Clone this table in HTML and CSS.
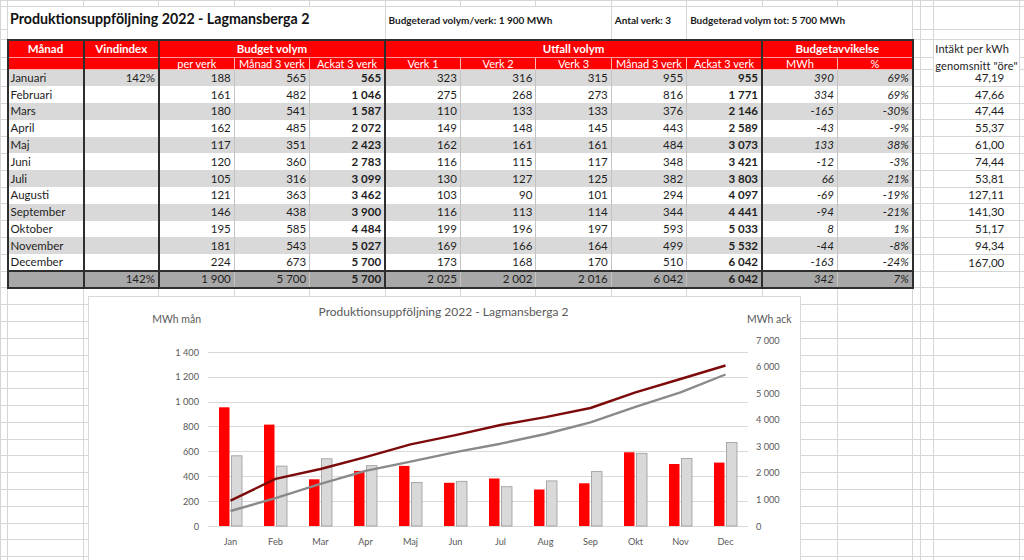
FILE: index.html
```html
<!DOCTYPE html>
<html lang="sv">
<head>
<meta charset="utf-8">
<title>Produktionsuppföljning 2022 - Lagmansberga 2</title>
<link rel="stylesheet" href="styles.css">
</head>
<body>
<div class="sheet">
<table class="grid">
<colgroup>
<col class="c0"><col class="ca"><col class="cn" span="11"><col class="cm"><col class="cnn"><col class="co"><col class="cp">
</colgroup>
<tbody>
<tr class="r0"><td></td><td></td><td></td><td></td><td></td><td></td><td></td><td></td><td></td><td></td><td></td><td></td><td></td><td></td><td></td><td></td><td></td></tr>
<tr class="r1"><td></td><td colspan="5" rowspan="2" class="title">Produktionsuppföljning 2022 - Lagmansberga 2</td><td colspan="3" rowspan="2" class="info">Budgeterad volym/verk: 1 900 MWh</td><td rowspan="2" class="info">Antal verk: 3</td><td colspan="3" rowspan="2" class="info">Budgeterad volym tot: 5 700 MWh</td><td></td><td></td><td></td><td></td></tr>
<tr class="r2"><td></td><td></td><td></td><td></td><td></td></tr>
<tr class="rh1"><td></td><th class="hd bl bt">Månad</th><th class="hd bl bt">Vindindex</th><th colspan="3" class="hd bl bt">Budget volym</th><th colspan="5" class="hd bl bt">Utfall volym</th><th colspan="2" class="hd bl br bt">Budgetavvikelse</th><td></td><td></td><td rowspan="2" class="inc-h"><div class="inc-txt">Intäkt per kWh<br>genomsnitt "öre"</div></td><td></td></tr>
<tr class="rh2"><td></td><th class="hs bl"></th><th class="hs bl"></th><th class="hs bl">per verk</th><th class="hs">Månad 3 verk</th><th class="hs">Ackat 3 verk</th><th class="hs bl">Verk 1</th><th class="hs">Verk 2</th><th class="hs">Verk 3</th><th class="hs">Månad 3 verk</th><th class="hs">Ackat 3 verk</th><th class="hs bl">MWh</th><th class="hs br">%</th><td></td><td></td><td></td></tr>
<tr class="rd g"><td></td><td>Januari</td><td>142%</td><td>188</td><td>565</td><td>565</td><td>323</td><td>316</td><td>315</td><td>955</td><td>955</td><td>390</td><td>69%</td><td></td><td></td><td>47,19</td><td></td></tr>
<tr class="rd"><td></td><td>Februari</td><td></td><td>161</td><td>482</td><td>1 046</td><td>275</td><td>268</td><td>273</td><td>816</td><td>1 771</td><td>334</td><td>69%</td><td></td><td></td><td>47,66</td><td></td></tr>
<tr class="rd g"><td></td><td>Mars</td><td></td><td>180</td><td>541</td><td>1 587</td><td>110</td><td>133</td><td>133</td><td>376</td><td>2 146</td><td>-165</td><td>-30%</td><td></td><td></td><td>47,44</td><td></td></tr>
<tr class="rd"><td></td><td>April</td><td></td><td>162</td><td>485</td><td>2 072</td><td>149</td><td>148</td><td>145</td><td>443</td><td>2 589</td><td>-43</td><td>-9%</td><td></td><td></td><td>55,37</td><td></td></tr>
<tr class="rd g"><td></td><td>Maj</td><td></td><td>117</td><td>351</td><td>2 423</td><td>162</td><td>161</td><td>161</td><td>484</td><td>3 073</td><td>133</td><td>38%</td><td></td><td></td><td>61,00</td><td></td></tr>
<tr class="rd"><td></td><td>Juni</td><td></td><td>120</td><td>360</td><td>2 783</td><td>116</td><td>115</td><td>117</td><td>348</td><td>3 421</td><td>-12</td><td>-3%</td><td></td><td></td><td>74,44</td><td></td></tr>
<tr class="rd g"><td></td><td>Juli</td><td></td><td>105</td><td>316</td><td>3 099</td><td>130</td><td>127</td><td>125</td><td>382</td><td>3 803</td><td>66</td><td>21%</td><td></td><td></td><td>53,81</td><td></td></tr>
<tr class="rd"><td></td><td>Augusti</td><td></td><td>121</td><td>363</td><td>3 462</td><td>103</td><td>90</td><td>101</td><td>294</td><td>4 097</td><td>-69</td><td>-19%</td><td></td><td></td><td>127,11</td><td></td></tr>
<tr class="rd g"><td></td><td>September</td><td></td><td>146</td><td>438</td><td>3 900</td><td>116</td><td>113</td><td>114</td><td>344</td><td>4 441</td><td>-94</td><td>-21%</td><td></td><td></td><td>141,30</td><td></td></tr>
<tr class="rd"><td></td><td>Oktober</td><td></td><td>195</td><td>585</td><td>4 484</td><td>199</td><td>196</td><td>197</td><td>593</td><td>5 033</td><td>8</td><td>1%</td><td></td><td></td><td>51,17</td><td></td></tr>
<tr class="rd g"><td></td><td>November</td><td></td><td>181</td><td>543</td><td>5 027</td><td>169</td><td>166</td><td>164</td><td>499</td><td>5 532</td><td>-44</td><td>-8%</td><td></td><td></td><td>94,34</td><td></td></tr>
<tr class="rd"><td></td><td>December</td><td></td><td>224</td><td>673</td><td>5 700</td><td>173</td><td>168</td><td>170</td><td>510</td><td>6 042</td><td>-163</td><td>-24%</td><td></td><td></td><td>167,00</td><td></td></tr>
<tr class="rd rt"><td></td><td></td><td>142%</td><td>1 900</td><td>5 700</td><td>5 700</td><td>2 025</td><td>2 002</td><td>2 016</td><td>6 042</td><td>6 042</td><td>342</td><td>7%</td><td></td><td></td><td></td><td></td></tr>
<tr class="re"><td></td><td></td><td></td><td></td><td></td><td></td><td></td><td></td><td></td><td></td><td></td><td></td><td></td><td></td><td></td><td></td><td></td></tr>
<tr class="re"><td></td><td></td><td></td><td></td><td></td><td></td><td></td><td></td><td></td><td></td><td></td><td></td><td></td><td></td><td></td><td></td><td></td></tr>
<tr class="re"><td></td><td></td><td></td><td></td><td></td><td></td><td></td><td></td><td></td><td></td><td></td><td></td><td></td><td></td><td></td><td></td><td></td></tr>
<tr class="re"><td></td><td></td><td></td><td></td><td></td><td></td><td></td><td></td><td></td><td></td><td></td><td></td><td></td><td></td><td></td><td></td><td></td></tr>
<tr class="re"><td></td><td></td><td></td><td></td><td></td><td></td><td></td><td></td><td></td><td></td><td></td><td></td><td></td><td></td><td></td><td></td><td></td></tr>
<tr class="re"><td></td><td></td><td></td><td></td><td></td><td></td><td></td><td></td><td></td><td></td><td></td><td></td><td></td><td></td><td></td><td></td><td></td></tr>
<tr class="re"><td></td><td></td><td></td><td></td><td></td><td></td><td></td><td></td><td></td><td></td><td></td><td></td><td></td><td></td><td></td><td></td><td></td></tr>
<tr class="re"><td></td><td></td><td></td><td></td><td></td><td></td><td></td><td></td><td></td><td></td><td></td><td></td><td></td><td></td><td></td><td></td><td></td></tr>
<tr class="re"><td></td><td></td><td></td><td></td><td></td><td></td><td></td><td></td><td></td><td></td><td></td><td></td><td></td><td></td><td></td><td></td><td></td></tr>
<tr class="re"><td></td><td></td><td></td><td></td><td></td><td></td><td></td><td></td><td></td><td></td><td></td><td></td><td></td><td></td><td></td><td></td><td></td></tr>
<tr class="re"><td></td><td></td><td></td><td></td><td></td><td></td><td></td><td></td><td></td><td></td><td></td><td></td><td></td><td></td><td></td><td></td><td></td></tr>
<tr class="re"><td></td><td></td><td></td><td></td><td></td><td></td><td></td><td></td><td></td><td></td><td></td><td></td><td></td><td></td><td></td><td></td><td></td></tr>
<tr class="re"><td></td><td></td><td></td><td></td><td></td><td></td><td></td><td></td><td></td><td></td><td></td><td></td><td></td><td></td><td></td><td></td><td></td></tr>
<tr class="re"><td></td><td></td><td></td><td></td><td></td><td></td><td></td><td></td><td></td><td></td><td></td><td></td><td></td><td></td><td></td><td></td><td></td></tr>
<tr class="re"><td></td><td></td><td></td><td></td><td></td><td></td><td></td><td></td><td></td><td></td><td></td><td></td><td></td><td></td><td></td><td></td><td></td></tr>
<tr class="re"><td></td><td></td><td></td><td></td><td></td><td></td><td></td><td></td><td></td><td></td><td></td><td></td><td></td><td></td><td></td><td></td><td></td></tr>
<tr class="re"><td></td><td></td><td></td><td></td><td></td><td></td><td></td><td></td><td></td><td></td><td></td><td></td><td></td><td></td><td></td><td></td><td></td></tr>
</tbody>
</table>

<div class="chart">
<svg class="chart-svg" width="713" height="280" viewBox="0 0 713 280" xmlns="http://www.w3.org/2000/svg">
  <text class="ct" x="355.5" y="19.5" text-anchor="middle">Produktionsuppföljning 2022 - Lagmansberga 2</text>
  <text class="at" x="113" y="27" text-anchor="end">MWh mån</text>
  <text class="at" x="659" y="27">MWh ack</text>
  <g class="gl">
    <line x1="120" x2="660" y1="56.5" y2="56.5"/>
    <line x1="120" x2="660" y1="81.5" y2="81.5"/>
    <line x1="120" x2="660" y1="106.5" y2="106.5"/>
    <line x1="120" x2="660" y1="130.5" y2="130.5"/>
    <line x1="120" x2="660" y1="155.5" y2="155.5"/>
    <line x1="120" x2="660" y1="180.5" y2="180.5"/>
    <line x1="120" x2="660" y1="205.5" y2="205.5"/>
    <line x1="120" x2="660" y1="230.5" y2="230.5"/>
  </g>
  <g class="yl" text-anchor="end">
    <text x="111" y="59.5">1 400</text>
    <text x="111" y="84.4">1 200</text>
    <text x="111" y="109.2">1 000</text>
    <text x="111" y="134.1">800</text>
    <text x="111" y="158.9">600</text>
    <text x="111" y="183.8">400</text>
    <text x="111" y="208.6">200</text>
    <text x="111" y="233.5">0</text>
  </g>
  <g class="yl">
    <text x="668" y="47.5">7 000</text>
    <text x="668" y="74.1">6 000</text>
    <text x="668" y="100.6">5 000</text>
    <text x="668" y="127.2">4 000</text>
    <text x="668" y="153.8">3 000</text>
    <text x="668" y="180.4">2 000</text>
    <text x="668" y="206.9">1 000</text>
    <text x="668" y="233.5">0</text>
  </g>
  <g class="bred">
    <rect x="131" y="111.3" width="10.5" height="118.7"/>
    <rect x="176" y="128.6" width="10.5" height="101.4"/>
    <rect x="221" y="183.3" width="10.5" height="46.7"/>
    <rect x="266" y="174.9" width="10.5" height="55.1"/>
    <rect x="311" y="169.9" width="10.5" height="60.1"/>
    <rect x="356" y="186.8" width="10.5" height="43.2"/>
    <rect x="401" y="182.5" width="10.5" height="47.5"/>
    <rect x="446" y="193.5" width="10.5" height="36.5"/>
    <rect x="491" y="187.3" width="10.5" height="42.7"/>
    <rect x="536" y="156.3" width="10.5" height="73.7"/>
    <rect x="581" y="168.0" width="10.5" height="62.0"/>
    <rect x="626" y="166.6" width="10.5" height="63.4"/>
  </g>
  <g class="bgray">
    <rect x="143.5" y="159.8" width="10.5" height="70.2"/>
    <rect x="188.5" y="170.1" width="10.5" height="59.9"/>
    <rect x="233.5" y="162.8" width="10.5" height="67.2"/>
    <rect x="278.5" y="169.7" width="10.5" height="60.3"/>
    <rect x="323.5" y="186.4" width="10.5" height="43.6"/>
    <rect x="368.5" y="185.3" width="10.5" height="44.7"/>
    <rect x="413.5" y="190.7" width="10.5" height="39.3"/>
    <rect x="458.5" y="184.9" width="10.5" height="45.1"/>
    <rect x="503.5" y="175.6" width="10.5" height="54.4"/>
    <rect x="548.5" y="157.3" width="10.5" height="72.7"/>
    <rect x="593.5" y="162.5" width="10.5" height="67.5"/>
    <rect x="638.5" y="146.4" width="10.5" height="83.6"/>
  </g>
  <polyline class="lgray" points="142.5,215.0 187.5,202.2 232.5,187.8 277.5,174.9 322.5,165.6 367.5,156.1 412.5,147.7 457.5,138.0 502.5,126.4 547.5,110.9 592.5,96.4 637.5,78.5"/>
  <polyline class="lred" points="142.5,204.6 187.5,182.9 232.5,173.0 277.5,161.2 322.5,148.4 367.5,139.1 412.5,129.0 457.5,121.1 502.5,112.0 547.5,96.3 592.5,83.0 637.5,69.5"/>
  <g class="xl" text-anchor="middle">
    <text x="142.5" y="248.5">Jan</text>
    <text x="187.5" y="248.5">Feb</text>
    <text x="232.5" y="248.5">Mar</text>
    <text x="277.5" y="248.5">Apr</text>
    <text x="322.5" y="248.5">Maj</text>
    <text x="367.5" y="248.5">Jun</text>
    <text x="412.5" y="248.5">Jul</text>
    <text x="457.5" y="248.5">Aug</text>
    <text x="502.5" y="248.5">Sep</text>
    <text x="547.5" y="248.5">Okt</text>
    <text x="592.5" y="248.5">Nov</text>
    <text x="637.5" y="248.5">Dec</text>
  </g>
</svg>
</div>
</div>
</body>
</html>
```

FILE: styles.css
```css
* { box-sizing: border-box; }
html, body { margin: 0; padding: 0; background: #fff; }
body {
  width: 1024px;
  height: 560px;
  overflow: hidden;
  font-family: Lato, "Open Sans", "Liberation Sans", sans-serif;
  color: #1e1e1e;
}
.sheet {
  position: relative;
  width: 1024px;
  height: 560px;
  overflow: hidden;
}
.grid {
  border-collapse: collapse;
  table-layout: fixed;
  width: 1030px;
  font-size: 11.5px;
}
.c0 { width: 7px; }
.ca { width: 76px; }
.cn { width: 75.4px; }
.cm { width: 8px; }
.cnn { width: 13px; }
.co { width: 86px; }
.cp { width: 10.6px; }

.grid td, .grid th {
  border: 1px solid #d6d6d6;
  padding: 0 3px;
  white-space: nowrap;
  overflow: hidden;
  font-weight: 400;
  line-height: 14px;
}
.r0 td { height: 6px; }
.r1 td { height: 23px; }
.r2 td { height: 10px; }
.rh1 th, .rh1 td { height: 18px; }
.rh2 th, .rh2 td { height: 12px; }
.rd td, .re td { height: 16.8px; }

.title {
  vertical-align: top;
  padding: 3px 2px 0 2px !important;
  font-size: 14.2px;
  font-weight: 700 !important;
  line-height: 17px !important;
  color: #111;
}
.info {
  vertical-align: top;
  padding: 6px 3px 0 3px !important;
  font-size: 10px;
  font-weight: 700 !important;
  color: #1a1a1a;
}

/* header */
.grid .hd {
  background: #ff0000;
  color: #fff;
  font-weight: 700;
  text-align: center;
  font-size: 11.5px;
  border-color: #ff9a9a;
  vertical-align: middle;
}
.grid .hs {
  background: #ff0000;
  color: #fff;
  text-align: center;
  font-size: 11px;
  line-height: 11px;
  border-color: #ffb3b3;
  vertical-align: bottom;
  overflow: visible;
}
.grid .inc-h {
  vertical-align: top;
  padding: 0 1px;
  overflow: visible;
  color: #222;
  border-bottom-color: transparent;
}
.inc-txt {
  height: 26px;
  overflow: visible;
  font-size: 11px;
  line-height: 17px;
  letter-spacing: 0.1px;
}

.grid .bl { border-left: 2px solid #2e2e2e; }
.grid .br { border-right: 2px solid #2e2e2e; }
.grid .bt { border-top: 2px solid #2e2e2e; }

/* data rows */
.rd td { text-align: right; vertical-align: middle; }
.rd td:nth-child(n+2):nth-child(-n+13) {
  border-top: 0 none;
  border-bottom: 0 none;
  border-left-color: #c3c3c3;
  border-right-color: #c3c3c3;
}
.rd.g td:nth-child(n+2):nth-child(-n+13) { background: #d9d9d9; }
.rd td:nth-child(2) { text-align: left; padding-left: 2px; }
.grid .rd td:nth-child(2),
.grid .rd td:nth-child(3),
.grid .rd td:nth-child(4),
.grid .rd td:nth-child(7),
.grid .rd td:nth-child(12) { border-left: 2px solid #2e2e2e; }
.grid .rd td:nth-child(13) { border-right: 2px solid #2e2e2e; }
.rd td:nth-child(6), .rd td:nth-child(11) { font-weight: 700; }
.rd td:nth-child(12), .rd td:nth-child(13) { font-style: italic; }
.rd td:nth-child(16) { padding-right: 15px; }

.grid .rt td:nth-child(n+2):nth-child(-n+13) {
  background: #a8a8a8;
  border-top: 2px solid #2e2e2e;
  border-bottom: 2px solid #2e2e2e;
}

/* chart */
.chart {
  position: absolute;
  left: 88px;
  top: 296px;
  width: 713px;
  height: 280px;
  background: #fff;
  border: 1px solid #d9d9d9;
}
.chart-svg { display: block; position: absolute; left: -1px; top: -1px; }
.chart-svg text { font-family: Lato, "Open Sans", sans-serif; fill: #595959; }
.chart-svg .ct { font-size: 12px; }
.chart-svg .at { font-size: 10.5px; }
.chart-svg .yl text { font-size: 9.2px; }
.chart-svg .xl text { font-size: 9.2px; }
.gl line { stroke: #d9d9d9; stroke-width: 1; }
.bred rect { fill: #ff0000; }
.bgray rect { fill: #d9d9d9; stroke: #9a9a9a; stroke-width: 0.8; }
.lred { fill: none; stroke: #7d0a0a; stroke-width: 2.4; stroke-linejoin: round; }
.lgray { fill: none; stroke: #8a8a8a; stroke-width: 2.4; stroke-linejoin: round; }
```
